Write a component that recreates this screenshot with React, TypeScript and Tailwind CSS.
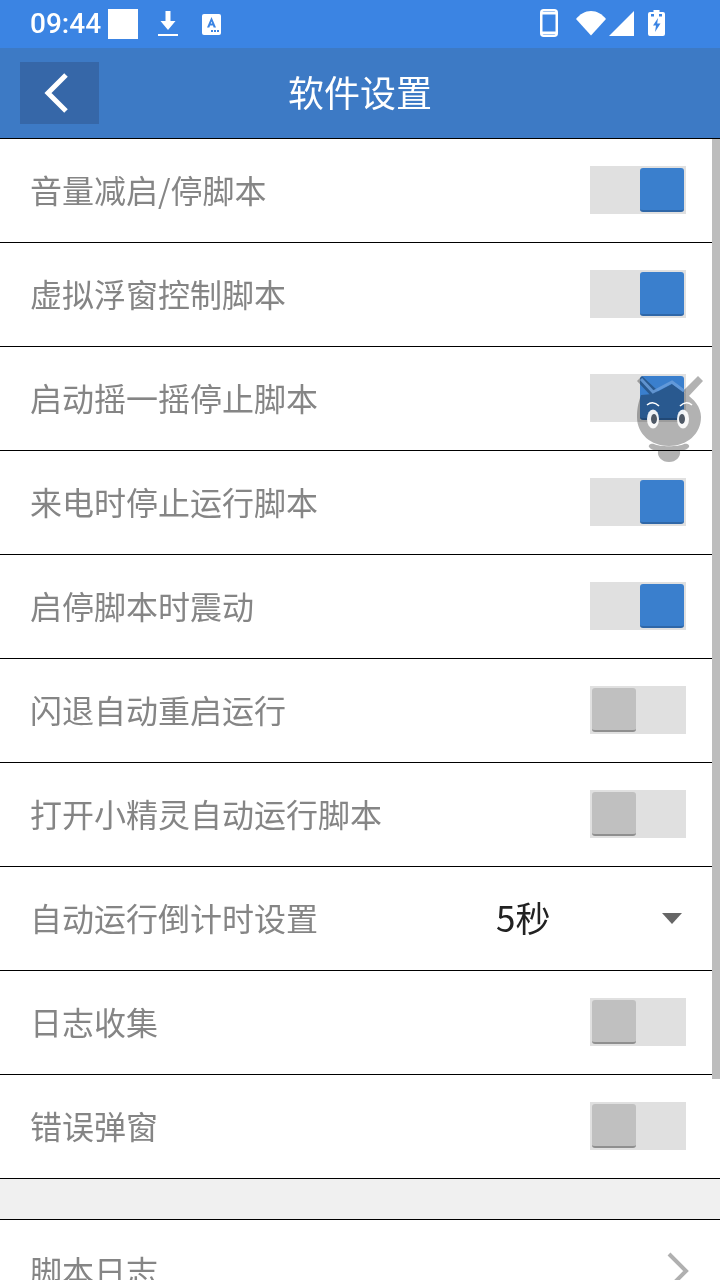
const font = { fontFamily: '"Noto Sans CJK SC", "Noto Sans", sans-serif' };

function Toggle({ on }: { on: boolean }) {
  return (
    <div className={`w-24 h-12 mb-[1px] bg-[#e0e0e0] flex items-center px-[2px] ${on ? "justify-end" : "justify-start"}`}>
      <div
        className={`w-11 h-11 rounded-[3px] border-b-2 ${on ? "bg-[#3a7fcd] border-[#2f67a8]" : "bg-[#c0c0c0] border-[#8f8f8f]"}`}
      />
    </div>
  );
}

function Row({ label, on }: { label: string; on: boolean }) {
  return (
    <div className="h-[104px] border-b border-black flex items-center justify-between pl-[30px] pr-[34px] bg-white">
      <span className="text-[32px] leading-none text-[#858585] pb-[4px]">{label}</span>
      <Toggle on={on} />
    </div>
  );
}

function StatusBar() {
  return (
    <div className="h-12 bg-[#3b84e3] flex items-center pl-[30px] pr-[55px] text-white">
      <span className="text-[28px] font-medium leading-none" style={{ fontFamily: "Roboto, sans-serif" }}>09:44</span>
      <div className="w-[30px] h-[30px] bg-white ml-[7px]" />
      <svg className="ml-[20px]" width="20" height="28" viewBox="0 0 20 28" fill="white">
        <path d="M7.5 1h5v10h5l-7.5 9-7.5-9h5z" />
        <rect x="0" y="24" width="20" height="2" />
      </svg>
      <svg className="ml-[24px]" width="19" height="21" viewBox="0 0 19 21">
        <rect x="0" y="0" width="19" height="21" rx="2" fill="white" />
        <path d="M5 13.5L9.5 3l4.5 10.5h-2.4l-.6-2H8l-.6 2z M8.8 9.5h1.4L9.5 7.4z" fill="#3b84e3" fillRule="evenodd" />
        <rect x="9" y="16" width="2" height="2" fill="#3b84e3" />
        <rect x="12" y="16" width="2" height="2" fill="#3b84e3" />
        <rect x="15" y="16" width="2" height="2" fill="#3b84e3" />
      </svg>
      <div className="flex-1" />
      <div className="flex items-center pb-[2px]">
        <svg width="18" height="28" viewBox="0 0 18 28">
          <rect x="1.25" y="1.25" width="15.5" height="25.5" rx="2.5" fill="none" stroke="white" strokeWidth="2.5" />
          <rect x="1" y="3" width="16" height="2.5" fill="white" />
          <rect x="1" y="22.5" width="16" height="2.5" fill="white" />
        </svg>
        <svg className="ml-[18px]" width="30" height="26" viewBox="0 0 30 26" fill="white">
          <path d="M15 25.5L0 9C4 4 9 1 15 1s11 3 15 8z" />
        </svg>
        <svg className="ml-[3px]" width="25" height="25" viewBox="0 0 25 25" fill="white">
          <path d="M25 0v25H0z" />
        </svg>
        <svg className="ml-[14px]" width="17" height="26" viewBox="0 0 17 26">
          <path d="M5.5 0h6v2h3.5a2 2 0 0 1 2 2v20a2 2 0 0 1-2 2H2a2 2 0 0 1-2-2V4a2 2 0 0 1 2-2h3.5z" fill="white" />
          <path d="M10 8L5 15.5h3L7 22l5.5-8.5H9.2z" fill="#3b84e3" />
          <rect x="3" y="4" width="3" height="2.5" fill="#3b84e3" />
          <rect x="11" y="4" width="3" height="2.5" fill="#3b84e3" />
        </svg>
      </div>
    </div>
  );
}

function Mascot() {
  return (
    <div className="absolute left-[634px] top-[374px] w-[72px] h-[92px]">
      <svg className="absolute inset-0 mix-blend-multiply" width="72" height="92" viewBox="0 0 72 92">
        <g fill="#b2b2b2">
          <path d="M3 7l5-5 16 15-6 6z" />
          <path d="M69 7l-5-5-15 15 5 6z" />
          <path d="M7 21L19 20 38 10 51 19C60 25 67 33 67 43 67 60 53 72 35 72S3 60 3 43C3 33 5 27 7 21z" />
          <path d="M20 70c5 3 25 3 30 0 3-1 6 1 5 3-1 2-4 3-9 4 1 6-4 11-11 11s-12-5-11-11c-5-1-8-2-9-4-1-2 2-4 5-3z" />
        </g>
      </svg>
      <svg className="absolute inset-0" width="72" height="92" viewBox="0 0 72 92">
        <path d="M7 5L19 18 38 8 50 17" fill="none" stroke="#6a9ddb" strokeWidth="3" strokeOpacity="0.85" />
        <ellipse cx="19" cy="45" rx="6" ry="9.5" fill="white" fillOpacity="0.92" />
        <ellipse cx="49" cy="45" rx="6" ry="9.5" fill="white" fillOpacity="0.92" />
        <ellipse cx="20" cy="45" rx="3" ry="5" fill="#4f5966" />
        <ellipse cx="48" cy="45" rx="3" ry="5" fill="#4f5966" />
        <path d="M13 31q6-5 12 1M46 32q6-6 12-1" fill="none" stroke="white" strokeWidth="1.6" />
      </svg>
    </div>
  );
}

const rowsA: [string, boolean][] = [
  ["音量减启/停脚本", true],
  ["虚拟浮窗控制脚本", true],
  ["启动摇一摇停止脚本", true],
  ["来电时停止运行脚本", true],
  ["启停脚本时震动", true],
  ["闪退自动重启运行", false],
  ["打开小精灵自动运行脚本", false],
];

const rowsB: [string, boolean][] = [
  ["日志收集", false],
  ["错误弹窗", false],
];

export default function App() {
  return (
    <div className="relative w-[720px] h-[1280px] overflow-hidden bg-white" style={font}>
      <StatusBar />
      <div className="h-[91px] bg-[#3d7ac5] border-b border-black flex items-center px-5">
        <div className="w-[79px] h-[62px] bg-[#3667a8] flex items-center justify-center">
          <svg className="mr-[6px]" width="26" height="40" viewBox="0 0 26 40" fill="none" stroke="white" strokeWidth="5">
            <path d="M22 2L4 20l18 18" />
          </svg>
        </div>
        <span className="flex-1 text-center text-[36px] leading-none text-white pb-[4px]">软件设置</span>
        <div className="w-[79px]" />
      </div>
      {rowsA.map(([l, o]) => (
        <Row key={l} label={l} on={o} />
      ))}
      <div className="h-[104px] border-b border-black flex items-center pl-[30px] bg-white">
        <span className="text-[32px] leading-none text-[#858585] w-[466px] pb-[4px]">自动运行倒计时设置</span>
        <span className="text-[35px] leading-none text-[#222222] pb-[4px] w-[54px] whitespace-nowrap">5秒</span>
        <div className="ml-[112px] w-0 h-0 border-l-[10px] border-r-[10px] border-t-[11px] border-l-transparent border-r-transparent border-t-[#666666]" />
      </div>
      {rowsB.map(([l, o]) => (
        <Row key={l} label={l} on={o} />
      ))}
      <div className="h-[41px] bg-[#f0f0f0] border-b border-black" />
      <div className="h-[104px] flex items-center justify-between pl-[30px] pr-[30px] bg-white">
        <span className="text-[32px] leading-none text-[#858585] pb-[4px]">脚本日志</span>
        <svg className="mb-[2px]" width="24" height="40" viewBox="0 0 24 40" fill="none" stroke="#b0b0b0" strokeWidth="4">
          <path d="M3 3l17 17L3 37" />
        </svg>
      </div>
      <div className="absolute right-0 top-[139px] w-2 h-[940px] bg-[#bdbdbd]" />
      <Mascot />
    </div>
  );
}
